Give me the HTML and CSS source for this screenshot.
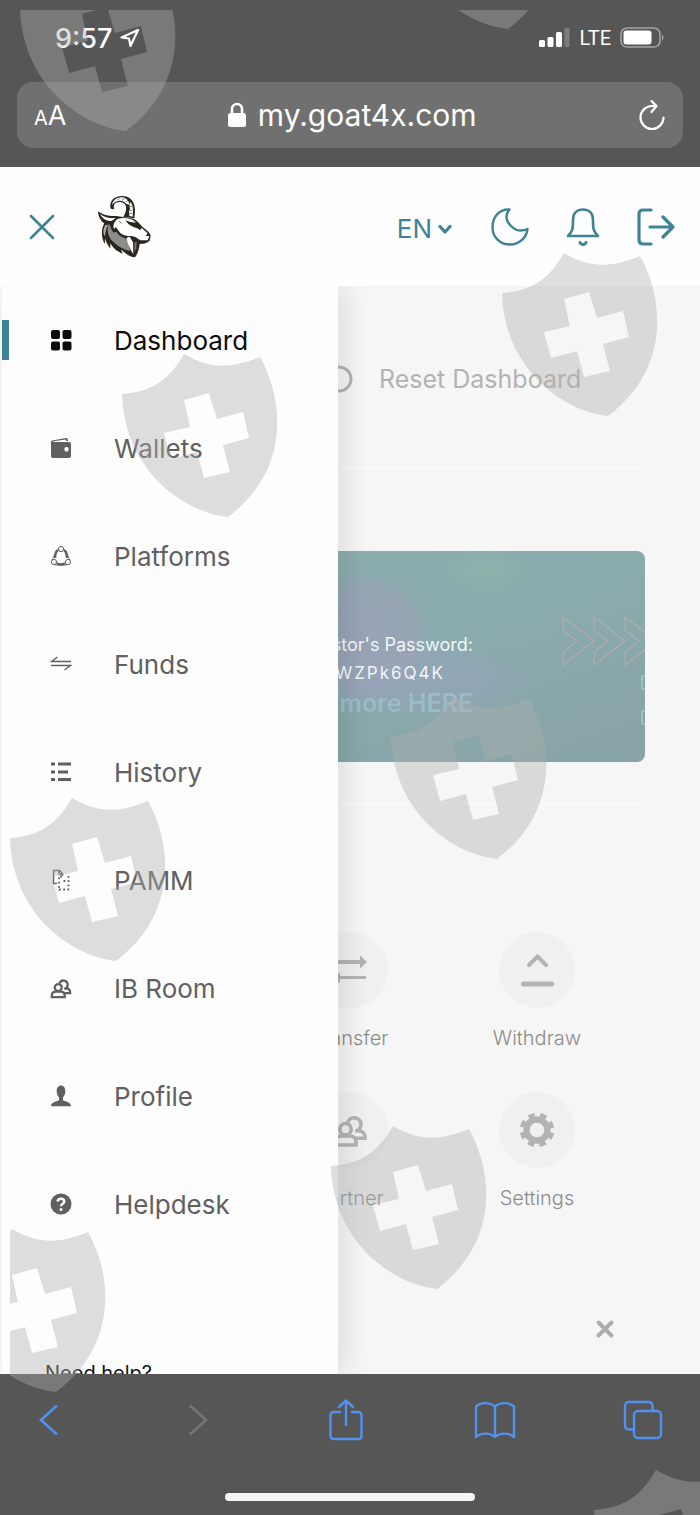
FILE: index.html
```
<!DOCTYPE html>
<html lang="en">
<head>
    <meta charset="UTF-8">
    <meta name="viewport" content="width=device-width, initial-scale=1.0">
    <title>Dashboard</title>
    <link rel="stylesheet" href="styles.css">
</head>
<body>
    <div class="browser-top">
        <div class="status-bar">
            <div class="status-time">
                <span>9:57</span>
                <svg width="20" height="20" viewBox="0 0 20 20" fill="none" stroke="#fff" stroke-width="2.200" stroke-linejoin="round"><path d="M18 2 L1.500 9.500 L9 10.500 L10.500 18 Z"/></svg>
            </div>
            <div class="status-right">
                <svg width="32" height="20" viewBox="0 0 32 20" fill="#fff">
                    <rect x="0" y="12" width="6" height="7" rx="1.500"/>
                    <rect x="8.500" y="9" width="6" height="10" rx="1.500"/>
                    <rect x="17" y="4" width="6" height="15" rx="1.500"/>
                    <rect x="25.500" y="0" width="5" height="19" rx="1.500" fill="#7d7d7d"/>
                </svg>
                <span class="network">LTE</span>
                <svg width="44" height="22" viewBox="0 0 44 22">
                    <rect x="1" y="1" width="39" height="19" rx="6" fill="none" stroke="#a5a5a5" stroke-width="1.600"/>
                    <rect x="3.500" y="3.500" width="28" height="14" rx="3" fill="#fff"/>
                    <path d="M42 7 Q45 10.500 42 14Z" fill="#a5a5a5"/>
                </svg>
            </div>
        </div>
        <div class="address-bar">
            <button class="text-size" aria-label="Text size"><span class="small-a">A</span><span>A</span></button>
            <div class="address">
                <svg width="18" height="26" viewBox="0 0 18 26"><path d="M4 12V7a5 5 0 0 1 10 0v5" fill="none" stroke="#fff" stroke-width="2.500"/><rect x="0" y="11" width="18" height="14" rx="2.500" fill="#fff"/></svg>
                <span>my.goat4x.com</span>
            </div>
            <button aria-label="Reload">
                <svg width="28" height="32" viewBox="0 0 28 32" fill="none" stroke="#fff" stroke-width="2.200" stroke-linecap="round" stroke-linejoin="round"><path d="M25.500 18.500a11.500 11.500 0 1 1 -11.500 -11.500h4"/><path d="M13.500 2l5 5l-5 6"/></svg>
            </button>
        </div>
    </div>

    <header class="site-header">
        <button class="menu-close" aria-label="Close menu">
            <svg width="26" height="26" viewBox="0 0 26 26" fill="none" stroke="#3e8494" stroke-width="2.600" stroke-linecap="round"><path d="M2 2l22 22M24 2L2 24"/></svg>
        </button>
        <a href="#" class="logo" aria-label="Home">
            <svg width="54" height="63" viewBox="22 16 162 189">
                <path d="M25 65 C42 78 64 80 80 79 L100 82 L132 87 C144 94 151 104 158 111 L177 127 L183 137 L180 153 C170 162 160 162 150 163 C148 178 145 190 136 203 C119 201 105 191 94 179 L99 192 C80 185 69 174 62 161 L62 177 C53 165 48 157 47 145 L45 163 C34 142 34 119 44 101 C35 95 26 83 25 65Z" fill="#2a251d"/>
                <path d="M31 73 C45 84 62 86 78 85 L66 94 C52 95 38 88 31 73Z" fill="#f8f8f8"/>
                <path d="M84 88 C98 83 117 85 130 91 L139 99 L122 97 L107 92 L116 103 L133 113 L146 117 L150 122 L156 115 L174 131 L168 139 L179 139 L174 152 L152 152 L137 142 L126 139 C108 141 92 134 86 122 L78 112 L73 118 C68 104 76 94 84 88Z" fill="#fff"/>
                <path d="M58 102 C48 119 57 147 74 159 C84 169 99 178 121 184 L116 148 C100 145 86 137 80 126 L72 129 C64 120 63 110 58 102Z" fill="#8c8c8c"/>
                <path d="M47 106 C39 120 40 133 46 140 C47 128 49 116 55 105Z" fill="#b0aca4"/>
                <path d="M120 141 L130 158 L131 194 C121 178 112 160 111 144Z" fill="#fff"/>
                <path d="M141 155 L140 176 L135 188 L134 160Z" fill="#777"/>
                <path d="M63 57 C57 34 74 18 99 19 C130 20 141 46 134 86 L101 82 C114 60 113 40 93 37 C76 35 69 46 74 59Z" fill="#2a251d"/>
                <path d="M67 46 C70 30 82 23 98 23 C112 25 118 35 120 46 L109 42 C98 30 80 30 67 46Z" fill="#f6f6f6"/>
                <path d="M122 36 C131 47 131 64 129 81 L119 79 L118 64 L121 57 L119 50Z" fill="#fff"/>
                <path d="M119 52l8 -2M119 62l9 -1M120 71l8 0M84 31l5 -5M99 32l3 -6M109 37l5 -5" stroke="#2a251d" stroke-width="2"/>
                <path d="M113 97L128 101L136 112L122 107Z" fill="#2a251d"/>
                <path d="M87 94l9 7" stroke="#2a251d" stroke-width="2"/>
            </svg>
        </a>
        <div class="header-actions">
            <button class="lang">EN
                <svg width="14" height="10" viewBox="0 0 14 10" fill="none" stroke="#3e8494" stroke-width="3.200" stroke-linecap="round" stroke-linejoin="round"><path d="M2 2.500l5 5.500l5 -5.500"/></svg>
            </button>
            <button aria-label="Dark mode">
                <svg width="38" height="38" viewBox="0 0 38 38" fill="none" stroke="#3e8494" stroke-width="2.400" stroke-linejoin="round"><path d="M18.500 1.500 C7 1 1.500 10 1.500 19.500 C1.500 29 9 36.500 19 36.500 C28 36.500 35.500 30 36.500 21 C30 24 24 22 20 18 C15 13 14 7 18.500 1.500Z"/></svg>
            </button>
            <button aria-label="Notifications">
                <svg width="34" height="38" viewBox="0 0 34 38" fill="none" stroke="#3e8494" stroke-width="2.600" stroke-linecap="round" stroke-linejoin="round"><path d="M2 28h30C27 23 27 20 27 12C27 5 23 1.500 17 1.500S7 5 7 12C7 20 7 23 2 28Z"/><path d="M14 34.500c1 2.500 5 2.500 6 0" stroke-width="3"/></svg>
            </button>
            <button aria-label="Log out">
                <svg width="38" height="38" viewBox="0 0 38 38" fill="none" stroke="#3e8494" stroke-width="3.200" stroke-linecap="round" stroke-linejoin="round"><path d="M14 2H6Q2 2 2 6V32Q2 36 6 36H14M13 19H36M26 9L36 19L26 29"/></svg>
            </button>
        </div>
    </header>

    <main class="screen">
        <div class="content">
            <div class="reset-row">
                <svg width="28" height="28" viewBox="0 0 28 28" fill="none" stroke="#b3b3b3" stroke-width="3"><circle cx="14" cy="14" r="12"/></svg>
                <span>Reset Dashboard</span>
            </div>
            <hr>
            <div class="banner">
                <div class="banner-text">
                    <span>Investor's Password:</span>
                    <span class="password">WZPk6Q4K</span>
                    <a href="#">more HERE</a>
                </div>
                <svg class="banner-arrows" width="84" height="110" viewBox="0 0 84 110" fill="none" stroke="#b3aab0" stroke-width="1.200">
                    <path d="M2 2l31 24l-31 24v-13l14 -11l-14 -11zM33 2l31 24l-31 24v-13l14 -11l-14 -11zM64 2l31 24l-31 24v-13l14 -11l-14 -11z"/>
                    <path d="M86 61h-5v13h5M86 96h-5v13h5" stroke="#a9d6d2"/>
                </svg>
            </div>
            <hr>
            <div class="tiles">
                <a href="#" class="tile">
                    <span class="tile-icon"><svg width="36" height="36" viewBox="0 0 36 36" fill="#b3b3b3"><path d="M2 8h26V3.500l7 6.500l-7 6.500V12H2zM34 24H8v-4l-7 6.500L8 31v-4h26z"/></svg></span>
                    Transfer
                </a>
                <a href="#" class="tile">
                    <span class="tile-icon"><svg width="36" height="36" viewBox="0 0 36 36" fill="none" stroke="#b3b3b3" stroke-linecap="round"><path d="M10 13l8.500 -8.500L27 13" stroke-width="4"/><path d="M4.500 32h28" stroke-width="5"/></svg></span>
                    Withdraw
                </a>
                <a href="#" class="tile">
                    <span class="tile-icon"><svg width="36" height="36" viewBox="0 0 24 24" fill="none" stroke="#b3b3b3" stroke-width="2.400"><path d="M2 22v-2q0 -4 4.500 -4h5q4.500 0 4.500 4v2z"/><circle cx="9" cy="11.500" r="3.800"/><path d="M10.500 7a4.500 4.500 0 1 1 5 5.800M17 12.500q5 0 5 4.500v.5h-6"/></svg></span>
                    Partner
                </a>
                <a href="#" class="tile">
                    <span class="tile-icon"><svg width="36" height="36" viewBox="-18 -18 36 36" fill="none" stroke="#b3b3b3"><circle r="10.500" stroke-width="6.500"/><circle r="15" stroke-width="4.500" stroke-dasharray="6.400 5.380" stroke-dashoffset="-2.700"/></svg></span>
                    Settings
                </a>
            </div>
            <button class="dismiss" aria-label="Dismiss">
                <svg width="20" height="20" viewBox="0 0 20 20" fill="none" stroke="#adadad" stroke-width="4" stroke-linecap="round"><path d="M3.500 3.500l13 13M16.500 3.500l-13 13"/></svg>
            </button>
        </div>

        <aside class="drawer">
            <nav>
                <a href="#" class="active">
                    <svg width="22" height="22" viewBox="0 0 22 22" fill="currentColor"><rect x="1" y="1" width="9" height="9" rx="2"/><rect x="12.500" y="1" width="9" height="9" rx="2"/><rect x="1" y="12.500" width="9" height="9" rx="2"/><rect x="12.500" y="12.500" width="9" height="9" rx="2"/></svg>
                    Dashboard
                </a>
                <a href="#">
                    <svg width="22" height="22" viewBox="0 0 22 22" fill="currentColor"><path d="M2 3.500L16 1q2 0 2 2v1H5q-2 0 -2 1h16q2 0 2 2v12q0 2 -2 2H3q-2 0 -2 -2V5q0 -1 1 -1.500z"/><rect x="14.500" y="10" width="4" height="4.500" rx="1.500" fill="#fdfdfd"/><path d="M5 4L16 2.500V4z" fill="#fdfdfd"/></svg>
                    Wallets
                </a>
                <a href="#">
                    <svg width="22" height="22" viewBox="0 0 22 22" fill="none" stroke="currentColor"><path d="M8 5Q5 7 5 13M14 5q3 2 3 8M7 18.500q4 2 8 0" stroke-width="2.600"/><circle cx="11" cy="4" r="2.600"/><circle cx="4" cy="17" r="2.600"/><circle cx="18" cy="17" r="2.600"/><path d="M2 15L7 5M20 15L15 5M5 20h12" stroke-width=".8"/></svg>
                    Platforms
                </a>
                <a href="#">
                    <svg width="22" height="22" viewBox="0 0 22 22" fill="none" stroke="currentColor" stroke-width="1.500"><path d="M21 8.500H1.500L7.500 4M1 12.500H20.500L14.500 17"/></svg>
                    Funds
                </a>
                <a href="#">
                    <svg width="22" height="22" viewBox="0 0 22 22" fill="none" stroke="currentColor" stroke-width="3"><path d="M1 3h4M8 3h13M1 11h4M8 11h10M1 18.500h4M8 18.500h13"/></svg>
                    History
                </a>
                <a href="#">
                    <svg width="22" height="22" viewBox="0 0 22 22" fill="none" stroke="currentColor" stroke-width="1.400"><path d="M7 14.500H3.500V1.500H9.500L12.500 4.500V7M9 1.500v3.500h3"/><path d="M9 8.500v13M9 20.500h10M10 7.500h4M18.500 7v13M13.500 12h5" stroke-width="1.800" stroke-dasharray="1.800 2.400"/></svg>
                    PAMM
                </a>
                <a href="#">
                    <svg width="22" height="22" viewBox="0 0 24 24" fill="none" stroke="currentColor" stroke-width="2.500"><path d="M2 22v-2q0 -4 4.500 -4h5q4.500 0 4.500 4v2z"/><circle cx="9" cy="11.500" r="3.800"/><path d="M10.500 7a4.500 4.500 0 1 1 5 5.800M17 12.500q5 0 5 4.500v.5h-6"/></svg>
                    IB Room
                </a>
                <a href="#">
                    <svg width="22" height="22" viewBox="0 0 22 22" fill="currentColor"><path d="M11 0.500c3 0 4.300 2.500 4.300 6c0 2.500 -1 4.500 -2.300 5.700v3c2.300 1.300 8 1.800 8 6H1c0 -4.200 5.700 -4.700 8 -6v-3C7.700 11 6.700 9 6.700 6.500C6.700 3 8 0.500 11 0.500Z"/></svg>
                    Profile
                </a>
                <a href="#">
                    <svg width="22" height="22" viewBox="0 0 22 22"><circle cx="11" cy="11" r="10.500" fill="currentColor"/><path d="M7.500 8.500C8 4.500 14.500 5 14.300 8.500C14 11 11 10.500 11 13.300" fill="none" stroke="#fdfdfd" stroke-width="2.400"/><circle cx="11" cy="16.500" r="1.500" fill="#fdfdfd"/></svg>
                    Helpdesk
                </a>
            </nav>
            <div class="need-help">Need help?</div>
        </aside>
    </main>

    <div class="browser-bottom">
        <div class="toolbar">
            <button aria-label="Back"><svg width="20" height="32" viewBox="0 0 20 32" fill="none" stroke="#5191f0" stroke-width="2.600"><path d="M18 1.500L2 16l16 14.500"/></svg></button>
            <button aria-label="Forward" disabled><svg width="20" height="32" viewBox="0 0 20 32" fill="none" stroke="#767676" stroke-width="2.600"><path d="M2 1.500L18 16L2 30.500"/></svg></button>
            <button aria-label="Share"><svg width="34" height="42" viewBox="0 0 34 42" fill="none" stroke="#5191f0" stroke-width="2.400" stroke-linecap="round" stroke-linejoin="round"><path d="M11 13H5q-3.500 0 -3.500 3.500v20q0 3.500 3.500 3.500h24q3.500 0 3.500 -3.500v-20q0 -3.500 -3.500 -3.500h-6M17 26V2M10 8l7 -6.500l7 6.500"/></svg></button>
            <button aria-label="Bookmarks"><svg width="42" height="38" viewBox="0 0 42 38" fill="none" stroke="#5191f0" stroke-width="2.400" stroke-linejoin="round"><path d="M21 5.500C16 1 7 1 2 5.500V36C7 31.500 16 31.500 21 36C26 31.500 35 31.500 40 36V5.500C35 1 26 1 21 5.500V36"/></svg></button>
            <button aria-label="Tabs"><svg width="40" height="40" viewBox="0 0 40 40" fill="none" stroke="#5191f0" stroke-width="2.400"><rect x="11" y="11" width="27" height="27" rx="4"/><path d="M11 29.500H6q-4 0 -4 -4V6q0 -4 4 -4h19.500q4 0 4 4v5"/></svg></button>
        </div>
        <div class="home-bar"></div>
    </div>

    <div class="watermark">
        <svg width="100%" height="100%" fill="#afafaf">
            <defs>
                <path id="shield" fill-rule="evenodd" d="M0 40C28 38 46 28 62 0C86 14 107 16 138 3C164 50 166 118 106 163C60 158 2 115 0 40ZM62 46L68 73L42 79L49 105L75 98L82 124L108 118L101 91L127 84L121 58L95 65L87 39Z"/>
            </defs>
            <use href="#shield" x="10" y="-42"/>
            <use href="#shield" x="392" y="-144"/>
            <use href="#shield" x="492" y="243"/>
            <use href="#shield" x="112" y="344"/>
            <use href="#shield" x="381" y="686"/>
            <use href="#shield" x="0" y="788"/>
            <use href="#shield" x="321" y="1116"/>
            <use href="#shield" x="-60" y="1219"/>
            <use href="#shield" x="584" y="1460"/>
        </svg>
    </div>
</body>
</html>
```
FILE: styles.css
```
* {
    box-sizing: border-box;
}

body {
    margin: 0;
    height: 100vh;
    display: flex;
    flex-direction: column;
    position: relative;
    overflow: hidden;
    font-family: 'Inter', sans-serif;
    background: #f6f6f6;
}

button {
    background: none;
    border: none;
    padding: 0;
    margin: 0;
    font: inherit;
    color: inherit;
    cursor: pointer;
}

a {
    color: inherit;
    text-decoration: none;
}

svg {
    display: block;
    flex-shrink: 0;
}

/* browser chrome */
.browser-top {
    background: #565656;
    color: #fff;
    padding: 20px 17px 19px;
}

.status-bar {
    display: flex;
    justify-content: space-between;
    align-items: center;
    height: 36px;
    margin-bottom: 26px;
    padding: 0 19px 0 38px;
}

.status-time {
    display: flex;
    align-items: center;
    gap: 8px;
    font-size: 27px;
    font-weight: 500;
}

.status-right {
    display: flex;
    align-items: center;
    gap: 9px;
}

.network {
    font-family: 'Roboto', sans-serif;
    font-size: 20px;
}

.address-bar {
    display: flex;
    justify-content: space-between;
    align-items: center;
    height: 66px;
    padding: 0 17px;
    border-radius: 16px;
    background: #707070;
}

.text-size {
    font-size: 27px;
}

.small-a {
    font-size: 20px;
}

.address {
    display: flex;
    align-items: center;
    gap: 12px;
    font-size: 30px;
}

/* site header */
.site-header {
    display: flex;
    align-items: center;
    height: 119px;
    padding: 0 25px 0 29px;
    background: #fefefe;
    color: #3e8494;
}

.logo {
    margin-left: 42px;
}

.header-actions {
    display: flex;
    align-items: center;
    gap: 37px;
    margin-left: auto;
}

.lang {
    display: flex;
    align-items: center;
    gap: 6px;
    margin-right: 2px;
    padding-top: 4px;
    font-size: 26px;
}

/* dashboard */
.screen {
    flex: 1;
    min-height: 0;
    position: relative;
    overflow: hidden;
}

.content {
    padding: 0 55px;
    display: flex;
    flex-direction: column;
}

.content hr {
    width: 100%;
    height: 3px;
    margin: 0;
    border: none;
    background: #f9f9f9;
}

.reset-row {
    display: flex;
    align-items: center;
    gap: 26px;
    padding: 78px 0 72px 270px;
    font-size: 25px;
    line-height: 30px;
    color: #b3b3b3;
}

.banner {
    display: flex;
    justify-content: space-between;
    height: 211px;
    margin: 82px 0 40px;
    border-radius: 8px;
    overflow: hidden;
    background:
        radial-gradient(circle at 310px 86px, rgba(156, 162, 184, 0.8) 0, rgba(156, 162, 184, 0.7) 50px, transparent 64px),
        radial-gradient(ellipse at 370px 130px, rgba(146, 165, 184, 0.9) 0, rgba(146, 165, 184, 0.6) 70px, transparent 110px),
        radial-gradient(ellipse at 432px 20px, rgba(143, 182, 168, 0.7) 0, transparent 50px),
        linear-gradient(160deg, #8db0b0 0%, #8aabad 55%, #88a2a6 100%);
}

.banner-text {
    width: 418px;
    padding-top: 80px;
    display: flex;
    flex-direction: column;
    align-items: flex-end;
    font-size: 18px;
    line-height: 28px;
    color: #f2f6f8;
}

.password {
    padding-right: 28px;
    font-size: 17px;
    letter-spacing: 2px;
}

.banner-text a {
    font-size: 25px;
    line-height: 32px;
    font-weight: 600;
    color: #9bbbc8;
}

.banner-arrows {
    margin-top: 64px;
}

.tiles {
    display: grid;
    grid-template-columns: repeat(3, 187px);
    justify-content: center;
    row-gap: 42px;
    margin-top: 127px;
}

.tile {
    display: flex;
    flex-direction: column;
    align-items: center;
    gap: 18px;
    font-size: 20px;
    line-height: 24px;
    font-weight: 300;
    color: #8c8c8c;
}

.tile:nth-child(odd) {
    grid-column: 2;
}

.tile-icon {
    display: flex;
    align-items: center;
    justify-content: center;
    width: 76px;
    height: 76px;
    border-radius: 50%;
    background: #f0f0f0;
}

.dismiss {
    align-self: flex-end;
    margin: 109px 30px 0 0;
}

/* slide-out menu, sits over the dashboard */
.drawer {
    position: absolute;
    top: 0;
    bottom: 0;
    left: 2px;
    width: 336px;
    background: #fdfdfd;
    box-shadow: 10px 0 24px rgba(0, 0, 0, 0.09);
}

.drawer nav a {
    display: flex;
    align-items: center;
    gap: 42px;
    height: 108px;
    padding-left: 41px;
    border-left: 7px solid transparent;
    font-size: 26px;
    color: #606060;
}

.drawer nav a.active {
    color: #0c0c0c;
    border-image: linear-gradient(transparent 34px, #3e8494 34px, #3e8494 74px, transparent 74px) 0 0 0 7;
}

.need-help {
    padding: 103px 0 0 43px;
    font-size: 20px;
    line-height: 24px;
    color: #111;
}

/* bottom toolbar */
.browser-bottom {
    height: 141px;
    padding: 24px 0 14px;
    background: #565656;
    display: flex;
    flex-direction: column;
    justify-content: space-between;
    align-items: center;
}

.toolbar {
    display: flex;
    justify-content: space-between;
    align-items: center;
    width: 100%;
    height: 44px;
    padding: 0 36px 0 28px;
}

.toolbar button {
    display: flex;
    justify-content: center;
    width: 42px;
}

.home-bar {
    width: 250px;
    height: 8px;
    border-radius: 4px;
    background: #f6f6f6;
}

.watermark {
    position: absolute;
    inset: 10px 0 0 10px;
    overflow: hidden;
    opacity: 0.4;
    pointer-events: none;
}
```
